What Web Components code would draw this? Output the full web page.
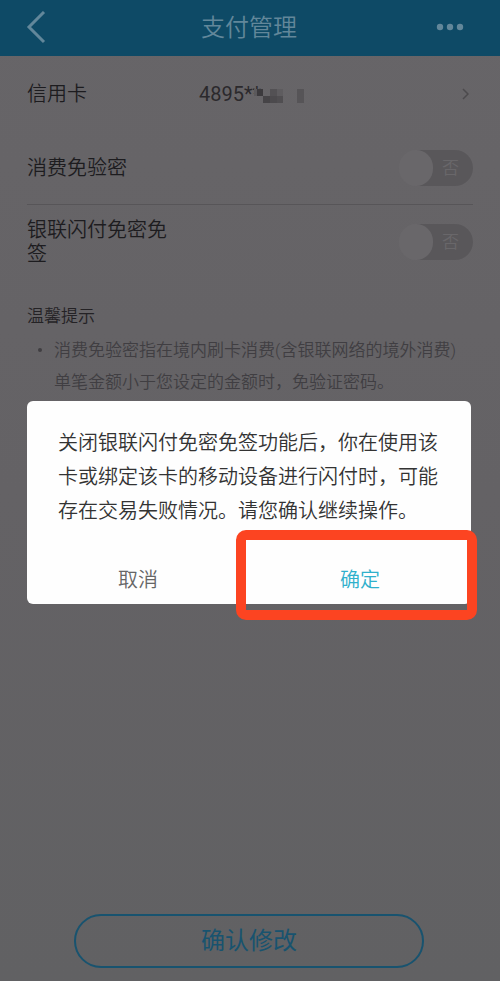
<!DOCTYPE html>
<html lang="zh-CN">
<head>
<meta charset="utf-8">
<meta name="viewport" content="width=device-width, initial-scale=1">
<title>支付管理</title>
<style>
  html, body { margin: 0; min-height: 100%; }
  body {
    font-family: Roboto, "Noto Sans CJK SC", sans-serif;
    font-weight: 350;
    background: #656366;
    color: #1d1c1f;
    --bar: #0e4a66;
    --muted: #403e42;
    --line: #575558;
    --accent: #18536f;
  }
</style>
</head>
<body>
<payment-page></payment-page>

<script>
const define = (name, html) => {
  const template = document.createElement('template');
  template.innerHTML = html;
  customElements.define(name, class extends HTMLElement {
    constructor() {
      super();
      this.attachShadow({ mode: 'open' }).append(template.content.cloneNode(true));
    }
  });
};

define('nav-bar', `
  <style>
    :host { display: grid; grid-template-columns: 1fr auto 1fr; align-items: center; height: 56px; padding: 0 28px 0 26px; background: var(--bar); color: #62879a; }
    h1 { margin: 0; font-size: 24px; line-height: 32px; font-weight: inherit; }
    button { display: flex; padding: 0; border: 0; background: none; color: inherit; }
    button:last-child { justify-self: end; padding-right: 8px; }
    svg { display: block; }
  </style>
  <button aria-label="返回"><svg width="20" height="34" viewBox="0 0 20 34" fill="none" stroke="currentColor" stroke-width="3"><path d="M18 1 3 16 18 31"/></svg></button>
  <h1><slot></slot></h1>
  <button aria-label="更多"><svg width="28" height="10" viewBox="0 0 28 10" fill="currentColor"><circle cx="4" cy="4" r="3.2"/><circle cx="14" cy="4" r="3.2"/><circle cx="24" cy="4" r="3.2"/></svg></button>
`);

define('card-row', `
  <style>
    :host { display: block; }
    a { display: grid; grid-template-columns: 172px 1fr auto; align-items: center; height: 75px; color: inherit; text-decoration: none; font-size: 20px; line-height: 24px; }
    .value { display: flex; align-items: center; color: #2b292c; font-weight: 400; }
    .value svg { margin-left: -11px; padding-top: 4px; }
    .go { margin-right: 4px; }
    svg { display: block; }
  </style>
  <a href="#card">
    <span><slot></slot></span>
    <span class="value"><slot name="value"></slot>
      <svg width="56" height="16" viewBox="0 0 56 16" aria-hidden="true">
        <path fill="#5b595c" d="M4 1h3v7H4z"/><path fill="#3c3a3d" d="M7 1h6v7H7z"/><path fill="#535154" d="M20 1h7v7h-7z"/>
        <path fill="#464447" d="M13 8h7v7h-7z"/><path fill="#4c4a4d" d="M20 8h7v7h-7z"/><path fill="#504e51" d="M27 8h6v7h-6z"/>
        <path fill="#5e5c5f" d="M27 1h6v7h-6z"/><path fill="#565457" d="M47 1h7v14h-7z"/>
      </svg>
    </span>
    <svg class="go" width="7" height="12" viewBox="0 0 7 12" fill="none" stroke="#4c4a4d" stroke-width="1.5"><path d="M1 1l5 5-5 5"/></svg>
  </a>
`);

define('switch-row', `
  <style>
    :host { display: flex; align-items: center; justify-content: space-between; height: 73px; font-size: 20px; line-height: 24px; }
    label { max-width: 144px; }
    .switch { position: relative; display: block; width: 74px; height: 36px; }
    input { appearance: none; display: block; width: 100%; height: 100%; margin: 0; border-radius: 18px; background: linear-gradient(90deg, #69676a 18px, #59575a 18px); }
    input::before { content: ""; display: block; width: 34px; height: 36px; border-radius: 18px; background: #69676a; }
    .state { position: absolute; right: 14px; top: 6px; font-size: 17px; color: #69676a; pointer-events: none; }
  </style>
  <label for="toggle"><slot></slot></label>
  <span class="switch"><input id="toggle" type="checkbox" role="switch"><span class="state">否</span></span>
`);

define('tips-box', `
  <style>
    :host { display: block; padding-top: 22px; font-size: 17px; line-height: 32px; }
    h2 { margin: 0; font-size: 17px; font-weight: inherit; color: #242225; }
    ul { margin: 2px 0 0; padding: 0 8px 0 27px; color: var(--muted); list-style: none; }
    li { position: relative; }
    li::before { content: ""; position: absolute; left: -16px; top: 14px; width: 4px; height: 4px; border-radius: 50%; background: currentColor; }
  </style>
  <h2><slot name="title"></slot></h2>
  <ul><li><slot></slot></li></ul>
`);

define('outline-button', `
  <style>
    :host { display: block; }
    button { display: block; width: 100%; height: 54px; border: 2px solid var(--accent); border-radius: 27px; background: none; color: var(--accent); font: inherit; font-size: 24px; font-weight: 400; line-height: 32px; }
  </style>
  <button><slot></slot></button>
`);

define('confirm-dialog', `
  <style>
    :host { position: absolute; inset: 0; display: flex; align-items: center; padding: 24px 29px 0 27px; }
    section { flex: 1; border-radius: 6px; background: #fefefe; color: #333; }
    p { margin: 0; padding: 25px 31px 0; font-size: 20px; line-height: 34px; }
    .actions { display: grid; grid-template-columns: 1fr 1fr; margin-top: 24px; }
    .cell { position: relative; height: 52px; display: flex; }
    button { flex: 1; padding: 0; border: 0; background: none; font: inherit; font-size: 20px; color: #666; }
    .ok { color: #2fb0cc; }
    .mark { position: absolute; inset: -22px -6px -16px -13px; border: 10px solid #fc4421; border-radius: 10px; pointer-events: none; }
  </style>
  <section role="dialog" aria-modal="true" aria-labelledby="message">
    <p id="message"><slot></slot></p>
    <div class="actions">
      <div class="cell"><button><slot name="cancel"></slot></button></div>
      <div class="cell"><button class="ok"><slot name="ok"></slot></button><span class="mark"></span></div>
    </div>
  </section>
`);

define('payment-page', `
  <style>
    :host { position: relative; display: flex; flex-direction: column; min-height: 100vh; background: linear-gradient(#676568, #646265 50%, #616163); }
    main { flex: 1; padding: 0 27px; }
    hr { margin: 0; border: 0; border-top: 1px solid var(--line); }
    footer { padding: 0 76px 13px 74px; }
  </style>
  <nav-bar>支付管理</nav-bar>
  <main>
    <card-row>信用卡<span slot="value">4895**</span></card-row>
    <switch-row>消费免验密</switch-row>
    <hr>
    <switch-row>银联闪付免密免签</switch-row>
    <tips-box><span slot="title">温馨提示</span>消费免验密指在境内刷卡消费(含银联网络的境外消费)单笔金额小于您设定的金额时，免验证密码。</tips-box>
  </main>
  <footer><outline-button>确认修改</outline-button></footer>
  <confirm-dialog>关闭银联闪付免密免签功能后，你在使用该卡或绑定该卡的移动设备进行闪付时，可能存在交易失败情况。请您确认继续操作。<span slot="cancel">取消</span><span slot="ok">确定</span></confirm-dialog>
`);
</script>
</body>
</html>
